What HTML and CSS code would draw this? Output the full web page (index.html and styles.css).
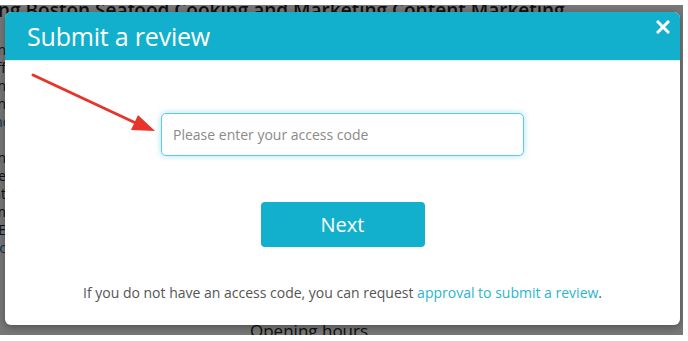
FILE: index.html
```html
<!DOCTYPE html>
<html lang="en">
<head>
    <meta charset="UTF-8">
    <meta name="viewport" content="width=device-width, initial-scale=1.0">
    <title>Submit a review</title>
    <link rel="stylesheet" href="styles.css">
</head>
<body>
<div class="screen">
    <div class="page">
        <div class="page-title">ng Boston Seafood Cooking and Marketing Content Marketing</div>
        <div class="page-side">
            <p>Location</p>
            <p>Cardiff</p>
            <p>Dublin</p>
            <p>Boston</p>
            <p class="blue">Boston.md</p>
            <p>&nbsp;</p>
            <p>Eastern</p>
            <p>Pie</p>
            <p>Tent</p>
            <p>Bream</p>
            <p>ONE</p>
            <p class="blue">Disc</p>
        </div>
        <div class="page-bottom">Opening hours</div>
    </div>

    <div class="overlay">
        <div class="modal">
            <div class="modal-header">
                <h1>Submit a review</h1>
                <button class="close" aria-label="Close">
                    <svg width="14" height="14" viewBox="0 0 14 14">
                        <path d="M2 2 L12 12 M12 2 L2 12" stroke="#fff" stroke-width="3" stroke-linecap="square"/>
                    </svg>
                </button>
            </div>
            <div class="modal-body">
                <svg class="arrow" width="130" height="70" viewBox="0 0 130 70">
                    <line x1="3" y1="4" x2="110" y2="54" stroke="#e6352b" stroke-width="3" stroke-linecap="round"/>
                    <polygon points="125,60 108,44 101,59" fill="#e6352b"/>
                </svg>
                <input type="text" class="code-input" placeholder="Please enter your access code">
                <button class="next-btn">Next</button>
                <p class="note">If you do not have an access code, you can request <a href="#">approval to submit a review</a>.</p>
            </div>
        </div>
    </div>
</div>
</body>
</html>
```

FILE: styles.css
```css
body { margin: 0; padding: 5px 5px 6px 0; background: #fff; font-family: "Open Sans", "Noto Sans", sans-serif; }
.screen { position: relative; height: 330px; overflow: hidden; background: #fff; }

/* page behind the dialog */
.page { height: 100%; color: #222; }
.page-title { font-size: 19px; font-weight: 600; line-height: 22px; margin-top: -6px; white-space: nowrap; margin-left: -2px; }
.page-side { margin-top: 20px; margin-left: -60px; width: 66px; text-align: right; font-size: 14px; }
.page-side p { margin: 0; line-height: 18px; }
.page-side .blue { color: #1a6fa0; }
.page-bottom { position: absolute; left: 250px; top: 314px; font-size: 17px; }

.overlay { position: absolute; inset: 0; background: rgba(0, 0, 0, 0.53); }

.modal { position: absolute; left: 5px; top: 7px; width: 675px; height: 313px; background: #fff; border-radius: 6px; overflow: hidden; box-shadow: 0 2px 8px rgba(0,0,0,0.35); }
.modal-header { height: 49px; background: #12b0cd; display: flex; justify-content: space-between; align-items: flex-start; padding: 0 10px 0 22px; border-bottom: 1px solid #d9eef3; box-sizing: border-box; }
.modal-header h1 { margin: 0; font-size: 25px; font-weight: 400; color: #fff; line-height: 49px; letter-spacing: -0.2px; }
.close { background: none; border: none; padding: 0; margin-top: 8px; cursor: pointer; display: flex; }

.modal-body { position: relative; display: flex; flex-direction: column; align-items: center; padding-top: 52px; }
.arrow { position: absolute; left: 25px; top: 10px; }
.code-input { width: 363px; height: 43px; box-sizing: border-box; border: 1px solid #5fcbe0; border-radius: 5px; padding: 0 11px; font-family: inherit; font-size: 14px; color: #333; box-shadow: 0 0 6px rgba(60, 190, 220, 0.45); outline: none; }
.code-input::placeholder { color: #8a8a8a; }
.next-btn { margin-top: 46px; width: 164px; height: 45px; border: none; border-radius: 4px; background: #12b0cd; color: #fff; font-family: inherit; font-size: 20px; cursor: pointer; }
.note { margin: 36px 0 0; font-size: 14px; color: #555; line-height: 20px; }
.note a { color: #2ab4d0; text-decoration: none; }
```
